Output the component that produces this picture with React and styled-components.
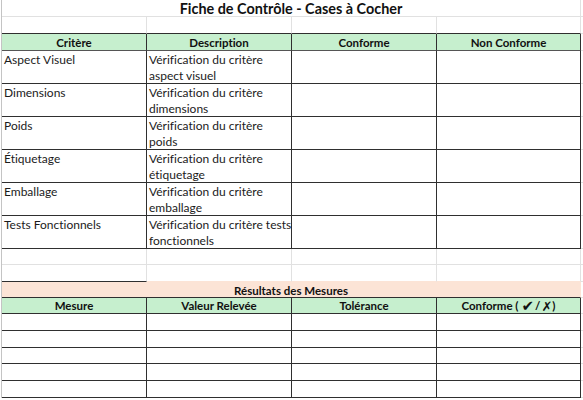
import React from "react";
import styled, { createGlobalStyle, css } from "styled-components";

const GlobalStyle = createGlobalStyle`
  html, body { margin: 0; padding: 0; background: #ffffff; }
  body {
    font-family: Lato, "Liberation Sans", sans-serif;
    color: #1b1b1b;
    font-variant-ligatures: none;
    font-feature-settings: "liga" 0;
  }
`;

const DARK = "#2f2f2f";
const GRID = "#e1e1e1";
const GREEN = "#c6efce";
const PINK = "#fce4d6";

const Sheet = styled.div`
  display: grid;
  grid-template-columns: 145px 145px 145px 144px 3px;
  margin-left: 1px;
  border-left: 1px solid #c4c4c4;
  width: max-content;
`;

const Cell = styled.div`
  box-sizing: border-box;
  height: ${(p) => p.$h}px;
  border-right: 1px solid ${(p) => p.$right || GRID};
  border-bottom: 1px solid ${(p) => p.$bottom || GRID};
  background: ${(p) => p.$bg || "transparent"};
  font-size: 12px;
  line-height: 16px;
  white-space: nowrap;
  ${(p) => p.$span && css`grid-column: 1 / span 4;`}
`;

const TitleCell = styled(Cell)`
  display: flex;
  align-items: flex-end;
  justify-content: center;
  font-weight: 700;
  font-size: 14.4px;
  line-height: 15px;
  color: #111;
`;

const BannerCell = styled(Cell)`
  display: flex;
  align-items: flex-end;
  justify-content: center;
  font-weight: 700;
  font-size: 11.5px;
  line-height: 13px;
  color: #111;
`;

const HeadCell = styled(Cell)`
  display: flex;
  align-items: flex-end;
  justify-content: center;
  font-weight: 700;
  font-size: 11.5px;
  line-height: 14px;
  color: #111;
  background: ${GREEN};
`;

const DataCell = styled(Cell)`
  padding: 1px 0 0 2px;
  position: relative;
  z-index: 1;
`;

const Line = styled.div`
  display: block;
`;

const Mark = styled.span`
  font-family: "DejaVu Sans", sans-serif;
  font-weight: 700;
  font-size: ${(p) => p.$size}px;
  line-height: 13px;
  margin: 0 ${(p) => p.$mr}px 0 ${(p) => p.$ml}px;
  color: #111;
`;

const Edge = styled.div`
  box-sizing: border-box;
  height: ${(p) => p.$h}px;
  border-bottom: 1px solid ${GRID};
`;

const criteria = [
  ["Aspect Visuel", ["Vérification du critère", "aspect visuel"]],
  ["Dimensions", ["Vérification du critère", "dimensions"]],
  ["Poids", ["Vérification du critère", "poids"]],
  ["Étiquetage", ["Vérification du critère", "étiquetage"]],
  ["Emballage", ["Vérification du critère", "emballage"]],
  ["Tests Fonctionnels", ["Vérification du critère tests", "fonctionnels"]],
];

const measureRows = [17, 17, 16, 17, 17];

export default function App() {
  return (
    <>
      <GlobalStyle />
      <Sheet>
        <TitleCell $h={17} $span>Fiche de Contrôle - Cases à Cocher</TitleCell>
        <Edge $h={17} />

        {[0, 1, 2, 3].map((i) => (
          <Cell key={"b" + i} $h={17} $bottom={DARK} />
        ))}
        <Edge $h={17} />

        {["Critère", "Description", "Conforme", "Non Conforme"].map((t) => (
          <HeadCell key={t} $h={17} $right={DARK} $bottom="#555">
            {t}
          </HeadCell>
        ))}
        <Edge $h={17} />

        {criteria.map(([name, desc]) => (
          <React.Fragment key={name}>
            <DataCell $h={33} $right={DARK} $bottom={DARK}>
              <Line>{name}</Line>
            </DataCell>
            <DataCell $h={33} $right={DARK} $bottom={DARK}>
              {desc.map((l) => (
                <Line key={l}>{l}</Line>
              ))}
            </DataCell>
            <DataCell $h={33} $right={DARK} $bottom={DARK} />
            <DataCell $h={33} $right={DARK} $bottom={DARK} />
            <Edge $h={33} />
          </React.Fragment>
        ))}

        {[0, 1, 2, 3].map((i) => (
          <Cell key={"e" + i} $h={16} />
        ))}
        <Edge $h={16} />
        <Cell $h={17} $bottom={DARK} />
        <Cell $h={17} $bottom={PINK} />
        <Cell $h={17} $bottom={PINK} />
        <Cell $h={17} $bottom={PINK} />
        <Edge $h={17} />

        <BannerCell $h={16} $span $bg={PINK} $right={PINK} $bottom={DARK}>
          Résultats des Mesures
        </BannerCell>
        <Edge $h={16} />

        {["Mesure", "Valeur Relevée", "Tolérance"].map((t) => (
          <HeadCell key={t} $h={16} $right={DARK} $bottom={DARK}>
            {t}
          </HeadCell>
        ))}
        <HeadCell $h={16} $right={DARK} $bottom={DARK}>
          Conforme (<Mark $size={15} $ml={3} $mr={1}>✔</Mark>/<Mark $size={13} $ml={1} $mr={0}>✗</Mark>)
        </HeadCell>
        <Edge $h={16} />

        {measureRows.map((h, r) => (
          <React.Fragment key={"m" + r}>
            {[0, 1, 2, 3].map((c) => (
              <Cell key={c} $h={h} $right={DARK} $bottom={DARK} />
            ))}
            <Edge $h={h} />
          </React.Fragment>
        ))}
      </Sheet>
    </>
  );
}
